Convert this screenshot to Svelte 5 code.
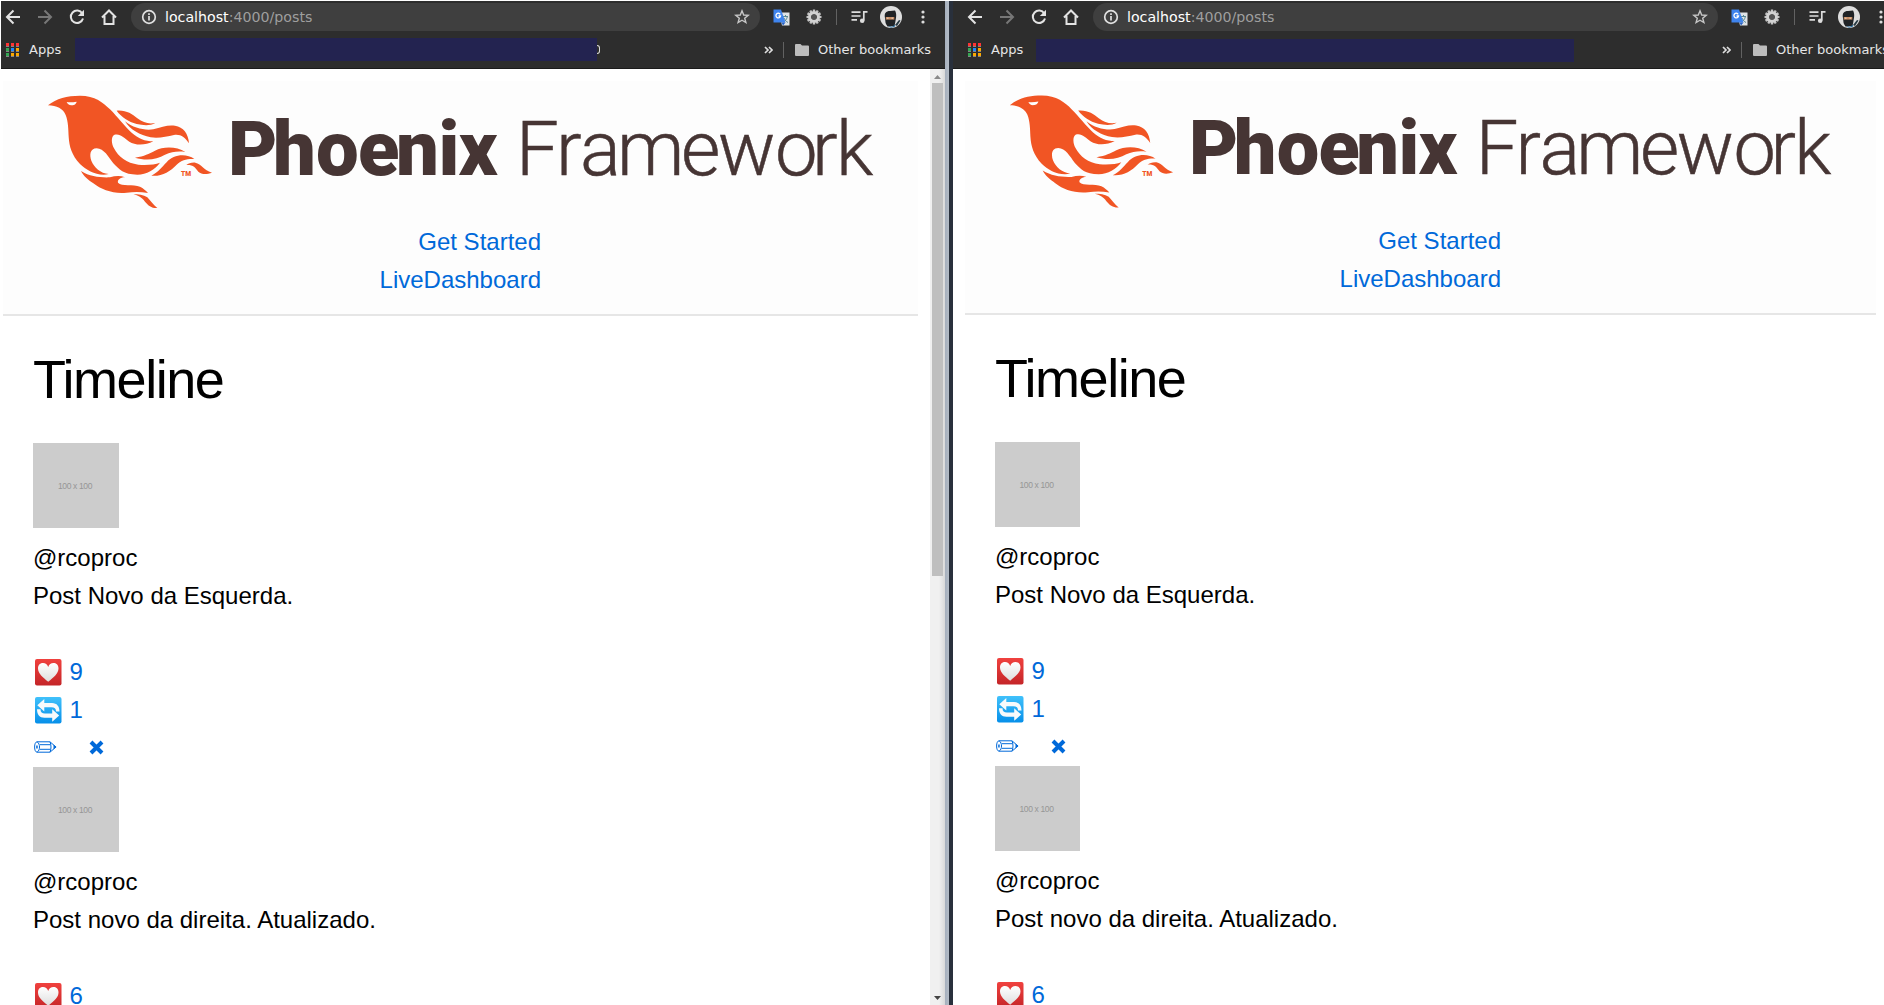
<script>
  const posts = [
    { user: '@rcoproc', body: 'Post Novo da Esquerda.', likes: 9, reposts: 1, actions: true },
    { user: '@rcoproc', body: 'Post novo da direita. Atualizado.', likes: 6 },
  ];
  const panes = ['left', 'right'];
  const appColors = ['#f33', '#f33', '#f33', '#34a853', '#1e88ff', '#fba800', '#34a853', '#fba800', '#fba800'];
  const teeth = Array.from({ length: 12 }, (_, i) => i * 30);
</script>

{#snippet toolbar()}
  <div class="toolbar">
    <svg class="nav" viewBox="0 0 16 16"><path d="M15 8H2M8.5 1.5 2 8l6.500 6.500" /></svg>
    <svg class="nav dim" viewBox="0 0 16 16"><path d="M1 8h13M7.500 1.500 14 8l-6.500 6.500" /></svg>
    <svg class="nav" viewBox="0 0 16 16"><path d="M13.300 4.500A6.200 6.200 0 1 0 14 9.500" /><path class="solid" d="M15 .8V7H8.800z" /></svg>
    <svg class="nav home" viewBox="0 0 16 16"><path d="M1 8.500 8 1.500l7 7M3.500 7v8h9V7" /></svg>
    <div class="omnibox">
      <svg class="info" viewBox="0 0 16 16"><circle cx="8" cy="8" r="6.300" /><path d="M8 7v4.500M8 4.200v1.800" /></svg>
      <span class="url">localhost<span>:4000/posts</span></span>
      <svg class="star" viewBox="0 0 16 16"><path d="M8 1.800 9.700 6l4.500.3-3.500 2.900 1.200 4.400L8 11.200l-3.900 2.400 1.200-4.400-3.500-2.900L6.300 6z" /></svg>
    </div>
    <svg class="translate" viewBox="0 0 17 17">
      <path fill="#dfe3e6" d="M6 3.500h10.500v13H9z" />
      <path fill="none" stroke="#5b8a93" d="M10 7.500h5M12.500 6v1.500M14.300 8c-.8 2.500-2 4-3.800 5M11 9c1 2.300 2.300 3.600 4 4.500" />
      <path fill="#3f84ee" d="M.5.500h7.500l4.500 13H.5z" /><path fill="#2862c4" d="M8.500 13.500h4L10 16.500z" />
      <path fill="none" stroke="#fff" stroke-width="1.300" d="M7.200 5.300A2.300 2.300 0 1 0 7.500 7H5.500" />
    </svg>
    <svg class="gear" viewBox="-8 -8 16 16">
      {#each teeth as a}<path d="M-1.100-7.500h2.200L1.600-4h-3.200z" transform="rotate({a})" />{/each}
      <circle r="4.300" fill="none" stroke="#d2d2d2" stroke-width="3" /><circle r="2.600" fill="#555" />
    </svg>
    <i class="divider"></i>
    <svg class="music" viewBox="0 0 17 16"><path d="M.5 3.200h9M.5 7h9M.5 10.800h5.500" /><path d="M12.800 11.500V2.800h3.700" /><circle cx="11.200" cy="11.700" r="2.300" /></svg>
    <svg class="avatar" viewBox="0 0 22 22">
      <circle cx="11" cy="11" r="11" fill="#dedede" />
      <path fill="#273942" d="m15 19 4-5 1.500.5-3.500 5.500z" />
      <path fill="#202326" d="M5 12C4 7 6 5 10 5l5-.5C17 8 16 12 15.500 15l-1 5-7 .5c-1-2-2-3-2-4z" />
      <path fill="#c98e65" d="M5.800 11h8.500v2.600H5.800z" /><path fill="#fff" d="M7.200 11.800h1.200v.6H7.200zm4.400 0h1.200v.6h-1.200z" />
      <path fill="#276b9d" d="m8 20 4 .8 3-2v1.800l-4 1.200z" />
    </svg>
    <svg class="dots" viewBox="0 0 4 14"><circle cx="2" cy="2" r="1.600" /><circle cx="2" cy="7" r="1.600" /><circle cx="2" cy="12" r="1.600" /></svg>
  </div>
{/snippet}

{#snippet bookmarks(side)}
  <div class="bookmarks">
    <div class="apps">{#each appColors as c}<i style="background:{c}"></i>{/each}</div>
    <span class="apps-label">Apps</span>
    <div class="redacted"></div>
    <span class="remnant">{#if side === 'left'}<b></b>{/if}</span>
    <svg class="more" viewBox="0 0 9 8"><path d="m1 1 3 3-3 3M5 1l3 3-3 3" /></svg>
    <i class="divider"></i>
    <svg class="folder" viewBox="0 0 14 12"><path d="M1 0h4.500L7 1.600h6q1 0 1 1V11q0 1-1 1H1q-1 0-1-1V1q0-1 1-1z" /></svg>
    <span class="other">Other bookmarks</span>
  </div>
{/snippet}

{#snippet logo()}
  <svg class="logo" viewBox="0 0 915 138">
    <g transform="translate(27 -1) scale(.33333)" fill="#f15524">
      <path d="M54 76C80 55 110 47 150 47C195 47 220 68 240 88C262 110 285 140 305 158C325 175 345 184 370 184C345 197 315 196 298 185C282 174 270 159 252 165C243 172 244 190 252 205C265 230 290 250 325 254C350 256 375 254 390 248C375 268 350 284 322 284C280 284 268 268 250 250C235 230 222 206 200 205C180 205 178 225 184 242C192 262 212 280 236 282C205 290 170 272 150 252C125 225 118 200 116 170C115 150 115 125 107 105C100 87 80 76 54 76Z" />
      <path d="M260 92C290 90 305 102 322 115C340 128 355 133 376 129C360 138 340 136 320 132C295 125 275 112 260 92Z" />
      <path d="M285 124C310 145 345 152 370 148C395 140 415 134 435 137C460 141 475 160 477 190C465 172 452 162 432 165C410 170 385 176 362 172C330 165 300 150 285 124Z" />
      <path d="M315 233C345 228 355 222 375 212C400 199 440 199 466 216C445 213 425 215 405 224C380 240 345 242 315 233Z" />
      <path d="M364 287C385 277 395 262 410 247C430 222 470 220 493 237C470 236 455 240 440 254C420 275 395 290 364 287Z" />
      <path d="M469 255C475 250 485 247 496 248C515 252 520 270 546 278C530 284 515 284 505 275C495 262 490 254 469 255Z" />
      <path d="M153 273C180 290 210 293 240 292C255 288 270 286 285 292C270 292 262 300 264 308C275 320 310 312 330 320C340 325 348 332 354 339C330 335 310 336 290 338C250 342 215 330 190 310C175 300 160 288 153 273Z" />
      <path d="M310 343C325 343 340 344 352 352C362 362 370 375 382 384C365 385 355 377 345 365C335 352 325 347 310 343Z" />
      <path fill="#fdfdfd" d="M110 66C120 68 130 66 140 65C138 74 130 76 124 76C117 75 112 71 110 66Z" />
      <text class="tm" x="453" y="289">TM</text>
    </g>
    <text class="word bold" x="225 270 313 355 393 435.500 455.500" y="93.700">Phoenix</text>
    <text class="word light" x="513 553 577 614 678 715 772 809 833" y="93.700">Framework</text>
  </svg>
{/snippet}

{#snippet heart()}
  <svg class="emoji" viewBox="0 0 27 27">
    <defs>
      <linearGradient id="red" x2="0" y2="1"><stop stop-color="#f0413e" /><stop offset="1" stop-color="#c42528" /></linearGradient>
      <linearGradient id="pale" x2="0" y2="1"><stop stop-color="#fff" /><stop offset="1" stop-color="#dedede" /></linearGradient>
    </defs>
    <rect width="26.500" height="26.500" rx="2" fill="url(#red)" />
    <path fill="url(#pale)" d="M13.200 22.700C8 18.500 3 14.500 3 9.500C3 5.500 5.500 4 8 4C10.500 4 12.300 5.500 13.200 8C14 5.500 16 4 18.500 4C21 4 23.500 5.500 23.500 9.500C23.500 14.500 18.500 18.500 13.200 22.700Z" />
  </svg>
{/snippet}

{#snippet refresh()}
  <svg class="emoji" viewBox="0 0 27 27">
    <defs><linearGradient id="blue" x2="0" y2="1"><stop stop-color="#40c1fb" /><stop offset="1" stop-color="#068fe9" /></linearGradient></defs>
    <rect width="26.500" height="26.500" rx="2" fill="url(#blue)" />
    <g fill="#f8fafb">
      <path d="M2.300 8.300 9.300 2v4H17C22 6 24.500 9.500 24.500 14.500H21C21 11.500 19.500 10.300 16.500 10.300H9.300v4.200Z" />
      <path transform="rotate(180 13.250 13.400)" d="M2.300 8.300 9.300 2v4H17C22 6 24.500 9.500 24.500 14.500H21C21 11.500 19.500 10.300 16.500 10.300H9.300v4.200Z" />
    </g>
  </svg>
{/snippet}

<div class="desktop">
  {#each panes as side}
    <section class="window {side}">
      <div class="chrome">
        {@render toolbar()}
        {@render bookmarks(side)}
      </div>
      <div class="view">
        <div class="page">
          <header>
            {@render logo()}
            <nav><a href="#start">Get Started</a><a href="#live">LiveDashboard</a></nav>
          </header>
          <main>
            <h1>Timeline</h1>
            {#each posts as post}
              <article>
                <div class="thumb">100 x 100</div>
                <p>{post.user}</p>
                <p class="body">{post.body}</p>
                <a class="stat" href="#like">{@render heart()}{post.likes}</a>
                {#if post.actions}
                  <a class="stat" href="#repost">{@render refresh()}{post.reposts}</a>
                  <div class="actions">
                    <a href="#edit" aria-label="Edit">
                      <svg class="pencil" viewBox="0 0 23 12"><path d="M3 .8h13L22 6l-6 5.200H3C1.600 11.200.6 9 .6 6S1.600.8 3 .8ZM3.200 1C4.800 1.800 5.500 3.800 5.500 6S4.800 10.200 3.200 11M6 3.700h10.500M6 8.300h10.500M16 1c1.300 2 1.300 8 0 10" /><path class="lead" d="m22.500 6-3-2.200v4.400zM2.200 4.500h1.500v3H2.200z" /></svg>
                    </a>
                    <a href="#delete" aria-label="Delete">
                      <svg class="cross" viewBox="0 0 15 15"><path d="m2 2 11 11M13 2 2 13" /></svg>
                    </a>
                  </div>
                {/if}
              </article>
            {/each}
          </main>
        </div>
        {#if side === 'left'}
          <div class="scrollbar">
            <svg viewBox="0 0 15 14"><path fill="#8a8a8a" d="M4 10 7.500 6 11 10z" /></svg>
            <div class="thumb-bar"></div>
            <svg class="down" viewBox="0 0 15 14"><path fill="#444" d="M4 5h7L7.500 9z" /></svg>
          </div>
        {/if}
      </div>
    </section>
    {#if side === 'left'}<div class="gutter"></div>{/if}
  {/each}
</div>

<style>
  :global(body) { background: #fff; overflow: hidden; }
  .desktop { display: flex; width: 1884px; height: 1005px; padding: 1px 0 0 1px; box-sizing: border-box; overflow: hidden; font-family: "Liberation Sans", Arial, sans-serif; }
  .window { display: flex; flex-direction: column; flex: none; height: 1004px; overflow: hidden; }
  .left { width: 944px; }
  .right { width: 931px; }
  .gutter { flex: none; width: 8px; background: linear-gradient(90deg, #a5afbd 0, #b4bcc6 4px, #29303c 4px, #29303c 100%); }
  .chrome { flex: none; height: 68px; box-sizing: border-box; background: #2d2d2d; border-bottom: 1px solid #1b1b1b; color: #e6e6e6; font-family: "DejaVu Sans", sans-serif; }
  svg { display: block; flex: none; }

  .toolbar { display: flex; align-items: center; height: 32px; padding-left: 4px; }
  .right .toolbar, .right .bookmarks { padding-left: 14px; width: 940px; box-sizing: content-box; }
  .nav { width: 16px; height: 16px; margin-right: 16px; fill: none; stroke: #e3e3e3; stroke-width: 2; }
  .nav.dim { stroke: #777; }
  .nav .solid { fill: #e3e3e3; stroke: none; }
  .nav.home { margin-right: 14px; }
  .omnibox { display: flex; align-items: center; flex: none; width: 629px; height: 28px; box-sizing: border-box; padding: 0 10px; border-radius: 14px; background: #3f3f3f; }
  .right .omnibox { width: 625px; }
  .info { width: 16px; height: 16px; margin-right: 8px; fill: none; stroke: #e0e0e0; stroke-width: 1.7; }
  .url { flex: 1; font-size: 14.2px; color: #fff; white-space: nowrap; }
  .url span { color: #9e9e9e; }
  .star { width: 16px; height: 16px; fill: none; stroke: #c6c6c6; stroke-width: 1.4; }
  .translate { width: 17px; height: 17px; margin-left: 13px; margin-right: 1px; }
  .gear { width: 16px; height: 16px; margin-left: 15px; fill: #c4c4c4; }
  .divider { flex: none; width: 1px; height: 16px; background: #626262; }
  .toolbar .divider { margin-left: 14px; }
  .music { width: 17px; height: 16px; margin-left: 14px; fill: none; stroke: #ddd; stroke-width: 1.7; }
  .music circle { fill: #ddd; stroke: none; }
  .avatar { width: 22px; height: 22px; margin-left: 12px; }
  .dots { width: 4px; height: 14px; margin-left: 19px; fill: #ddd; }

  .bookmarks { display: flex; align-items: center; height: 33px; padding-left: 5px; font-size: 13px; white-space: nowrap; }
  .right .bookmarks { padding-left: 15px; }
  .apps { display: grid; grid-template-columns: repeat(3, 3px); gap: 2px; flex: none; width: 13px; margin-right: 10px; }
  .apps i { height: 3px; border-bottom: 1px solid #858585; margin-bottom: -1px; }
  .apps-label { flex: none; width: 46px; }
  .redacted { flex: none; width: 522px; height: 23px; background: #232350; }
  .right .redacted { width: 538px; margin: 1px 0 -1px -1px; }
  .remnant { flex: none; width: 3px; height: 9px; margin-right: 164px; }
  .remnant b { display: block; width: 3px; height: 9px; box-sizing: border-box; border: solid #ddd; border-width: 1px 1px 1px 0; border-radius: 0 3px 3px 0; }
  .right .remnant { margin-right: 145px; }
  .more { width: 9px; height: 8px; fill: none; stroke: #ddd; stroke-width: 1.7; margin-right: 10px; }
  .folder { width: 14px; height: 12px; margin: 0 9px 0 11px; fill: #bdbdbd; }

  .view { display: flex; flex: 1; min-height: 0; overflow: hidden; background: #fff; }
  .page { flex: 1; min-width: 0; padding: 12px 12px 0 2px; }
  .right .page { padding: 12px 8px 0 12px; }
  header { box-sizing: border-box; height: 235px; background: #fdfdfd; border-bottom: 2px solid #e6e6e6; }
  .right header { height: 234px; }
  .logo { width: 100%; height: auto; }
  .word { font-family: Roboto, sans-serif; font-size: 76px; fill: #463534; }
  .word.bold { font-weight: 900; }
  .word.light { font-weight: 300; stroke: #463534; stroke-width: .5px; }
  .tm { font-family: Roboto, sans-serif; font-size: 20px; font-weight: 900; }
  nav { display: flex; flex-direction: column; width: 538px; padding-top: 4px; text-align: right; font-size: 24px; line-height: 38px; }
  .right nav { width: 536px; }
  a { color: #0069d9; text-decoration: none; }
  main { padding-left: 30px; font-size: 24px; line-height: 38px; color: #000; }
  h1 { margin: 0; height: 127px; box-sizing: border-box; padding-top: 31px; font-size: 54px; line-height: 64px; font-weight: 400; letter-spacing: -1.45px; }
  .thumb { display: flex; align-items: center; justify-content: center; width: 86px; height: 85px; margin-bottom: 11px; background: #ccc; color: #969696; font-size: 8.5px; line-height: 10px; letter-spacing: -.35px; padding: 1px 2px 0 0; box-sizing: border-box; }
  .right .thumb { width: 85px; }
  p { margin: 0; height: 38px; white-space: nowrap; }
  .body { margin-bottom: 38px; }
  .stat { display: flex; align-items: center; height: 38px; }
  .emoji { width: 27px; height: 27px; margin: 0 7.5px 0 2px; }
  .actions { display: flex; align-items: center; height: 38px; padding: 0 0 2px 1px; box-sizing: border-box; }
  .actions a { width: 55px; }
  .pencil { width: 23px; height: 12px; fill: none; stroke: #0069d9; stroke-width: 1; }
  .lead { fill: #0069d9; stroke: none; }
  .cross { width: 15px; height: 15px; fill: none; stroke: #0069d9; stroke-width: 4; }

  .scrollbar { display: flex; flex-direction: column; width: 15px; background: linear-gradient(90deg, #f0f0f0 60%, #d9d9d9); }
  .scrollbar svg { width: 15px; height: 14px; }
  .thumb-bar { width: 11px; height: 493px; margin-left: 2px; background: #bfbfbf; }
  .down { margin-top: auto; }
</style>
